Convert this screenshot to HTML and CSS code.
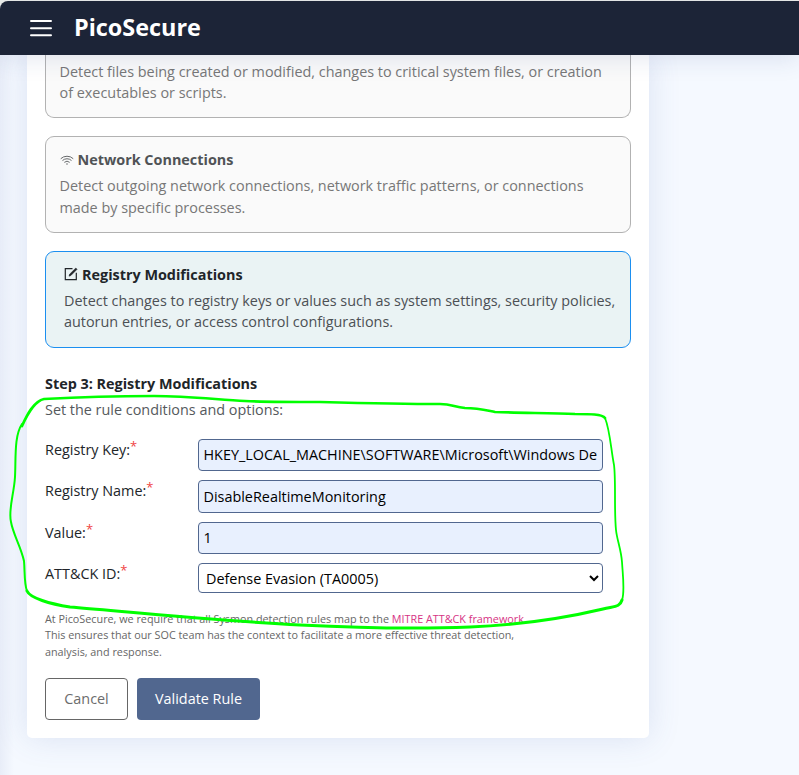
FILE: index.html
```html
<!DOCTYPE html>
<html lang="en">
<head>
<meta charset="utf-8">
<title>PicoSecure</title>
<link rel="stylesheet" href="styles.css">
</head>
<body>
<header class="topbar">
  <svg class="menu" viewBox="0 0 22 18" width="22" height="18" fill="none" stroke="#fff" stroke-width="2" stroke-linecap="round"><path d="M1 2h20M1 9.3h20M1 16.2h20"/></svg>
  <div class="brand">PicoSecure</div>
</header>
<main class="page">
  <section class="card">
    <div class="option option-cut">
      <p>Detect files being created or modified, changes to critical system files, or creation<br>of executables or scripts.</p>
    </div>
    <div class="option">
      <h3><svg class="wifi" viewBox="0 0 16 16" width="14" height="14" fill="none" stroke="currentColor" stroke-linecap="round"><path d="M1.2 6.2a10 10 0 0 1 13.6 0M3.2 8.3a7 7 0 0 1 9.6 0M5.3 10.4a4 4 0 0 1 5.4 0"/><circle cx="8" cy="12.6" r=".8" fill="currentColor" stroke="none"/></svg>Network Connections</h3>
      <p>Detect outgoing network connections, network traffic patterns, or connections<br>made by specific processes.</p>
    </div>
    <div class="option option-selected">
      <h3><svg viewBox="0 0 14 14" width="14" height="14" fill="none" stroke="currentColor" stroke-width="1.2"><path d="M8.5 1.6H1.3v11h11V5.8"/><path d="M5 9.2l.6-2L11.8 1l1.3 1.3-6.2 6.2z" fill="currentColor" stroke-width=".5"/></svg>Registry Modifications</h3>
      <p>Detect changes to registry keys or values such as system settings, security policies,<br>autorun entries, or access control configurations.</p>
    </div>
    <h2 class="step">Step 3: Registry Modifications</h2>
    <p class="lead">Set the rule conditions and options:</p>
    <form class="fields">
      <div class="row"><label for="key">Registry Key:<span class="req">*</span></label><input id="key" class="first" type="text" value="HKEY_LOCAL_MACHINE\SOFTWARE\Microsoft\Windows Defender"></div>
      <div class="row"><label for="name">Registry Name:<span class="req">*</span></label><input id="name" class="tall" type="text" value="DisableRealtimeMonitoring"></div>
      <div class="row"><label for="value">Value:<span class="req">*</span></label><input id="value" type="text" value="1"></div>
      <div class="row"><label for="attack">ATT&amp;CK ID:<span class="req">*</span></label><select id="attack"><option>Defense Evasion (TA0005)</option></select></div>
    </form>
    <p class="note">At PicoSecure, we require that all Sysmon detection rules map to the <a>MITRE ATT&amp;CK framework</a><br>This ensures that our SOC team has the context to facilitate a more effective threat detection,<br>analysis, and response.</p>
    <div class="actions">
      <button class="btn cancel" type="button">Cancel</button>
      <button class="btn primary" type="button">Validate Rule</button>
    </div>
  </section>
</main>
<svg class="marker" viewBox="0 0 799 775" width="799" height="775" fill="none" stroke="#00ff00" stroke-linecap="round" stroke-linejoin="round">
  <path stroke-width="2.7" d="M22 426C27 415 34 401 44 399C80 397 115 396 154 396C190 396 220 400 245 401C270 402 292 402 320 402C360 403 400 404 440 404C452 404 454 407 465 408C478 408 485 410 495 412C520 413 550 413 575 414C590 414 602 414 605 418"/>
  <path stroke-width="1.8" d="M605 418C610 430 611 450 614 465C616 480 614 510 616 530C617 540 621 549 622 562C623 578 625 592 622 600"/>
  <path stroke-width="3" d="M622 600C620 607 615 606 603 609C565 618 520 625 470 627C420 629 360 628 300 625C220 621 130 612 70 607C50 604 30 598 27 591"/>
  <path stroke-width="2" d="M27 591C24 583 25 572 24 561C21 547 13 534 11 522C8 510 14 494 15 477C16 458 14 436 22 424"/>
</svg>
</body>
</html>
```
FILE: styles.css
```css
* { box-sizing: border-box; }
body {
  margin: 0;
  height: 775px;
  overflow: hidden;
  padding-top: 1px;
  background: #f5f9ff linear-gradient(#eceeea, #eceeea) 0 0 / 100% 8px no-repeat;
  font-family: "Open Sans", sans-serif;
  font-size: 14.4px;
  color: #212529;
}
h2, h3, p { margin: 0; }
.topbar {
  position: relative;
  z-index: 2;
  display: flex;
  align-items: center;
  height: 54px;
  padding-left: 30px;
  border-radius: 8px 0 0 0;
  background: #1c2437;
  box-shadow: 0 4px 24px rgba(40, 65, 130, .13);
}
.menu { margin-right: 22px; }
.brand { color: #fff; font-size: 23.4px; font-weight: 700; line-height: 52px; height: 54px; }
.page {
  height: 720px;
  overflow: hidden;
  padding-left: 27px;
  background: linear-gradient(90deg, #e8edf8, #f5f9ff 14px);
}
.card {
  width: 622px;
  height: 683px;
  padding: 0 18px;
  background: #fff;
  border-radius: 0 0 5px 5px;
  box-shadow: 0 0 32px rgba(65, 95, 165, .15);
}
.option {
  height: 97px;
  margin-bottom: 18px;
  padding: 12px 13.5px;
  border: 1px solid #b2b2b2;
  border-radius: 9px;
  background: #fafafa;
  color: #777;
  line-height: 21.6px;
  white-space: nowrap;
}
.option h3 {
  display: flex;
  align-items: center;
  gap: 4px;
  height: 22px;
  margin-bottom: 4px;
  color: #505356;
  font-size: 14.4px;
}
.option-cut {
  height: 63px;
  padding-top: 6px;
  border-top: 0;
  border-radius: 0 0 9px 9px;
  line-height: 21px;
}
.option-selected {
  padding-top: 11px;
  padding-left: 18px;
  border-color: #1b8ff0;
  background: #eaf3f4;
  color: #4c5054;
  line-height: 21px;
}
.option-selected h3 { margin-bottom: 5px; color: #212529; }
.step { margin-top: 25px; font-size: 14.4px; line-height: 22px; }
.lead { margin-top: 4px; line-height: 22px; color: #55595d; }
.fields { margin-top: 18px; height: 154px; display: grid; grid-template-rows: repeat(4, 41.33px); }
.row { display: grid; grid-template-columns: 153px 405px; align-items: start; }
.row label { line-height: 22px; }
.req { color: #f04444; font-size: 13px; position: relative; top: -4px; line-height: 0; }
.row input, .row select {
  width: 405px;
  height: 32px;
  border: 1px solid #51678f;
  border-radius: 4px;
  background: #e8f0fe;
  font: 14.4px "Open Sans", sans-serif;
  color: #000;
  padding: 0 5px;
}
.row input { padding-left: 4.5px; }
.row .first { padding-bottom: 2px; }
.row .tall { height: 33px; }
.row select { height: 30px; background: #fff; padding: 1px 0 0 3px; }
.note { margin-top: 18px; color: #666; font-size: 10.8px; line-height: 16.4px; white-space: nowrap; }
.note a { color: #d63384; }
.actions { display: flex; gap: 9px; margin-top: 17.3px; }
.btn { height: 42px; padding: 0; border-radius: 4px; font: 14.4px "Open Sans", sans-serif; }
.cancel { width: 83px; border: 1px solid #666; background: #fff; color: #6c6c6c; }
.primary { width: 123px; border: 0; background: #51678f; color: #fff; }
.marker { position: absolute; top: 0; left: 0; z-index: 3; pointer-events: none; }
```
